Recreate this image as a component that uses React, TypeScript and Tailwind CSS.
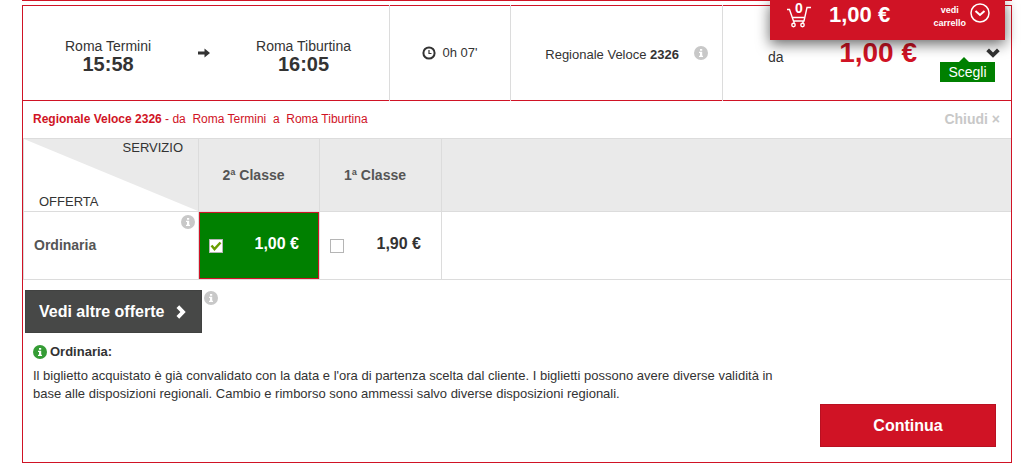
import { useState } from "react";

function InfoIcon({ className }: { className: string }) {
  return (
    <svg viewBox="0 0 14 14" className={className} aria-hidden="true">
      <circle cx="7" cy="7" r="7" fill="currentColor" />
      <path d="M6 3h2.2v1.8H6zM5 5.8h3.2v4H9v1.2H5V9.800h1V7H5z" fill="#fff" />
    </svg>
  );
}

function ClockIcon() {
  return (
    <svg viewBox="0 0 14 14" className="size-[14px]" fill="none" stroke="currentColor" aria-hidden="true">
      <circle cx="7" cy="7" r="5.600" strokeWidth="2" />
      <path d="M7 4v3.500h2.500" strokeWidth="1.200" />
    </svg>
  );
}

function ArrowIcon() {
  return (
    <svg viewBox="0 0 12 10" className="h-[10px] w-3" fill="currentColor" aria-hidden="true">
      <path d="M0 3.500h6.500V.500L12 5 6.500 9.500v-3H0z" />
    </svg>
  );
}

function ChevronIcon({ className }: { className: string }) {
  return (
    <svg viewBox="0 0 14 10" className={className} fill="currentColor" aria-hidden="true">
      <path d="M.3 3.200 3 .5l4 3.900L11 .5l2.700 2.700L7 9.700z" />
    </svg>
  );
}

function CartIcon() {
  return (
    <svg viewBox="0 0 26 26" className="h-[26px] w-[26px]" fill="none" stroke="currentColor" strokeWidth="1.400" aria-hidden="true">
      <path d="M1 7.500h2.500L7.500 19H18L21 5.500h4M6 15.500h13" />
      <path d="M8 19v2M17 19v2" />
      <circle cx="7.500" cy="23" r="1.700" />
      <circle cx="16.500" cy="23" r="1.700" />
    </svg>
  );
}

function CartBar() {
  return (
    <aside className="absolute top-0 right-6 flex h-10 w-[235px] bg-[#d01325] pr-[15px] pl-4 text-white shadow-[0_4px_14px_rgba(0,0,0,0.6)]">
      <div className="relative w-[26px] pt-[2px]">
        <CartIcon />
        <span className="absolute top-[2px] left-[9px] bg-[#d01325] text-sm leading-3 font-bold">0</span>
      </div>
      <strong className="ml-[17px] pt-[3px] text-[22px] leading-6">1,00 €</strong>
      <button type="button" className="ml-auto flex gap-1 text-[9px] leading-[13px] font-bold">
        <span className="pt-1 text-center">
          vedi
          <br />
          carrello
        </span>
        <svg viewBox="0 0 20 20" className="mt-[3px] size-5" fill="none" stroke="currentColor" strokeWidth="1.500" aria-hidden="true">
          <circle cx="10" cy="10" r="9" />
          <path d="m5.500 8 4.500 4 4.500-4" strokeWidth="2" />
        </svg>
      </button>
    </aside>
  );
}

function Stop({ name, time }: { name: string; time: string }) {
  return (
    <div className="pt-1 text-center text-sm leading-[18px]">
      <div>{name}</div>
      <div className="text-xl leading-[18px] font-bold">{time}</div>
    </div>
  );
}

function PriceOption({ label, price, checked, onSelect }: { label: string; price: string; checked: boolean; onSelect: () => void }) {
  const tone = checked ? "border-[#d01325] bg-[#008000] text-white" : "border-transparent";
  return (
    <td className="border border-[#dcdcdc] p-0">
      <label className={`flex h-[67px] items-center justify-between border pr-[19px] pb-1 pl-[9px] ${tone}`}>
        <span className="relative mt-1 size-[14px]">
          <input
            type="checkbox"
            aria-label={label}
            checked={checked}
            onChange={onSelect}
            className="block size-[14px] appearance-none border border-[#b5b5b5] bg-white"
          />
          {checked && (
            <svg viewBox="0 0 14 14" className="pointer-events-none absolute inset-0" fill="none" stroke="#6a9e00" strokeWidth="2.500" aria-hidden="true">
              <path d="m2.500 6.500 3 3.500 6-6.500" />
            </svg>
          )}
        </span>
        <span className="text-base leading-5 font-bold">{price}</span>
      </label>
    </td>
  );
}

export default function App() {
  const [service, setService] = useState(2);
  const cell = "flex items-center border-y border-[#d01325]";
  return (
    <main className="relative pr-[17px] pl-[22px] font-['Liberation_Sans',Arial,sans-serif] text-[13px] text-[#333]">
      <div className="h-px bg-[#d01325]" />
      <section className="mt-1 border-x border-b border-[#d01325]">
        <header className="flex h-24">
          <div className={`${cell} w-[366px] justify-between pr-[38px] pl-[42px]`}>
            <Stop name="Roma Termini" time="15:58" />
            <ArrowIcon />
            <Stop name="Roma Tiburtina" time="16:05" />
          </div>
          <div className="w-px bg-[#dcdcdc]" />
          <div className={`${cell} w-[120px] justify-center gap-[6px]`}>
            <ClockIcon />
            <span>0h 07'</span>
          </div>
          <div className="w-px bg-[#dcdcdc]" />
          <div className={`${cell} w-[211px] justify-end gap-[15px] pr-[14px]`}>
            <span className="pt-1">
              Regionale Veloce <strong>2326</strong>
            </span>
            <InfoIcon className="size-[14px] text-[#c8c8c8]" />
          </div>
          <div className="w-px bg-[#dcdcdc]" />
          <div className={`${cell} flex-1 pr-[11px] pl-[45px]`}>
            <span className="pt-2 text-sm">da</span>
            <strong className="ml-auto text-[28px] leading-8 text-[#d01325]">1,00 €</strong>
            <div className="ml-[23px] flex w-[60px] flex-col gap-1 pt-6">
              <ChevronIcon className="h-[10px] w-[14px] self-end" />
              <button type="button" className="relative h-5 w-[55px] bg-[#008000] text-sm leading-5 text-white">
                <svg viewBox="0 0 10 5" className="absolute -top-[5px] left-[19px] h-[5px] w-[10px]" aria-hidden="true">
                  <path d="m0 5 5-5 5 5z" fill="#008000" />
                </svg>
                Scegli
              </button>
            </div>
          </div>
        </header>

        <div className="flex h-[37px] items-center justify-between pr-[11px] pb-[2px] pl-[10px]">
          <h2 className="text-xs text-[#d01325]">
            <strong>Regionale Veloce 2326</strong> - da &nbsp;Roma Termini &nbsp;a &nbsp;Roma Tiburtina
          </h2>
          <button type="button" className="text-sm font-bold text-[#c8c8c8]">
            Chiudi ×
          </button>
        </div>

        <table className="w-full table-fixed border-collapse">
          <colgroup>
            <col className="w-[175px]" />
            <col className="w-[121px]" />
            <col className="w-[122px]" />
            <col />
          </colgroup>
          <thead>
            <tr className="h-[73px] bg-[#eaeaea] text-sm text-[#555]">
              <th className="relative border border-[#dcdcdc] p-0 text-[13px] font-normal text-[#333]">
                <svg viewBox="0 0 100 100" preserveAspectRatio="none" className="absolute inset-0 size-full" aria-hidden="true">
                  <path d="M0 0v100h100z" fill="#fff" />
                </svg>
                <div className="relative flex h-[72px] flex-col justify-between pr-[15px] pl-[15px]">
                  <span className="self-end leading-[18px]">SERVIZIO</span>
                  <span className="self-start leading-[18px]">OFFERTA</span>
                </div>
              </th>
              <th className="border border-[#dcdcdc] pr-[11px] font-bold">2ª Classe</th>
              <th className="border border-[#dcdcdc] pr-[11px] font-bold">1ª Classe</th>
              <td className="border border-r-0 border-[#dcdcdc]" />
            </tr>
          </thead>
          <tbody>
            <tr className="h-[68px]">
              <th className="relative border border-[#dcdcdc] p-0 pb-[2px] pl-[10px] text-left text-sm text-[#555]">
                Ordinaria
                <InfoIcon className="absolute top-[3px] right-[3px] size-[14px] text-[#c8c8c8]" />
              </th>
              <PriceOption label="2ª Classe" price="1,00 €" checked={service === 2} onSelect={() => setService(2)} />
              <PriceOption label="1ª Classe" price="1,90 €" checked={service === 1} onSelect={() => setService(1)} />
              <td className="border border-r-0 border-[#dcdcdc]" />
            </tr>
          </tbody>
        </table>

        <div className="mt-[10px] flex gap-[2px] pl-[2px]">
          <button type="button" className="flex h-[43px] w-[177px] items-center justify-between border border-[#414241] bg-[#474847] px-[13px] text-base font-bold text-white">
            Vedi altre offerte
            <ChevronIcon className="h-[10px] w-[14px] -rotate-90" />
          </button>
          <InfoIcon className="mt-px size-[14px] text-[#c8c8c8]" />
        </div>

        <div className="px-[10px] pt-[11px]">
          <h3 className="flex items-center gap-[3px] text-[13px] leading-4 font-bold">
            <InfoIcon className="size-[14px] text-[#359c35]" />
            Ordinaria:
          </h3>
          <p className="max-w-[765px] pt-[7px] text-[13px] leading-[18px]">
            Il biglietto acquistato è già convalidato con la data e l'ora di partenza scelta dal cliente. I biglietti possono avere diverse
            validità in base alle disposizioni regionali. Cambio e rimborso sono ammessi salvo diverse disposizioni regionali.
          </p>
        </div>
        <div className="mt-[1px] flex justify-end pr-[15px] pb-[15px]">
          <button type="button" className="h-[43px] w-44 border border-[#b91021] bg-[#d01325] text-base font-bold text-white">
            Continua
          </button>
        </div>
      </section>
      <CartBar />
    </main>
  );
}
